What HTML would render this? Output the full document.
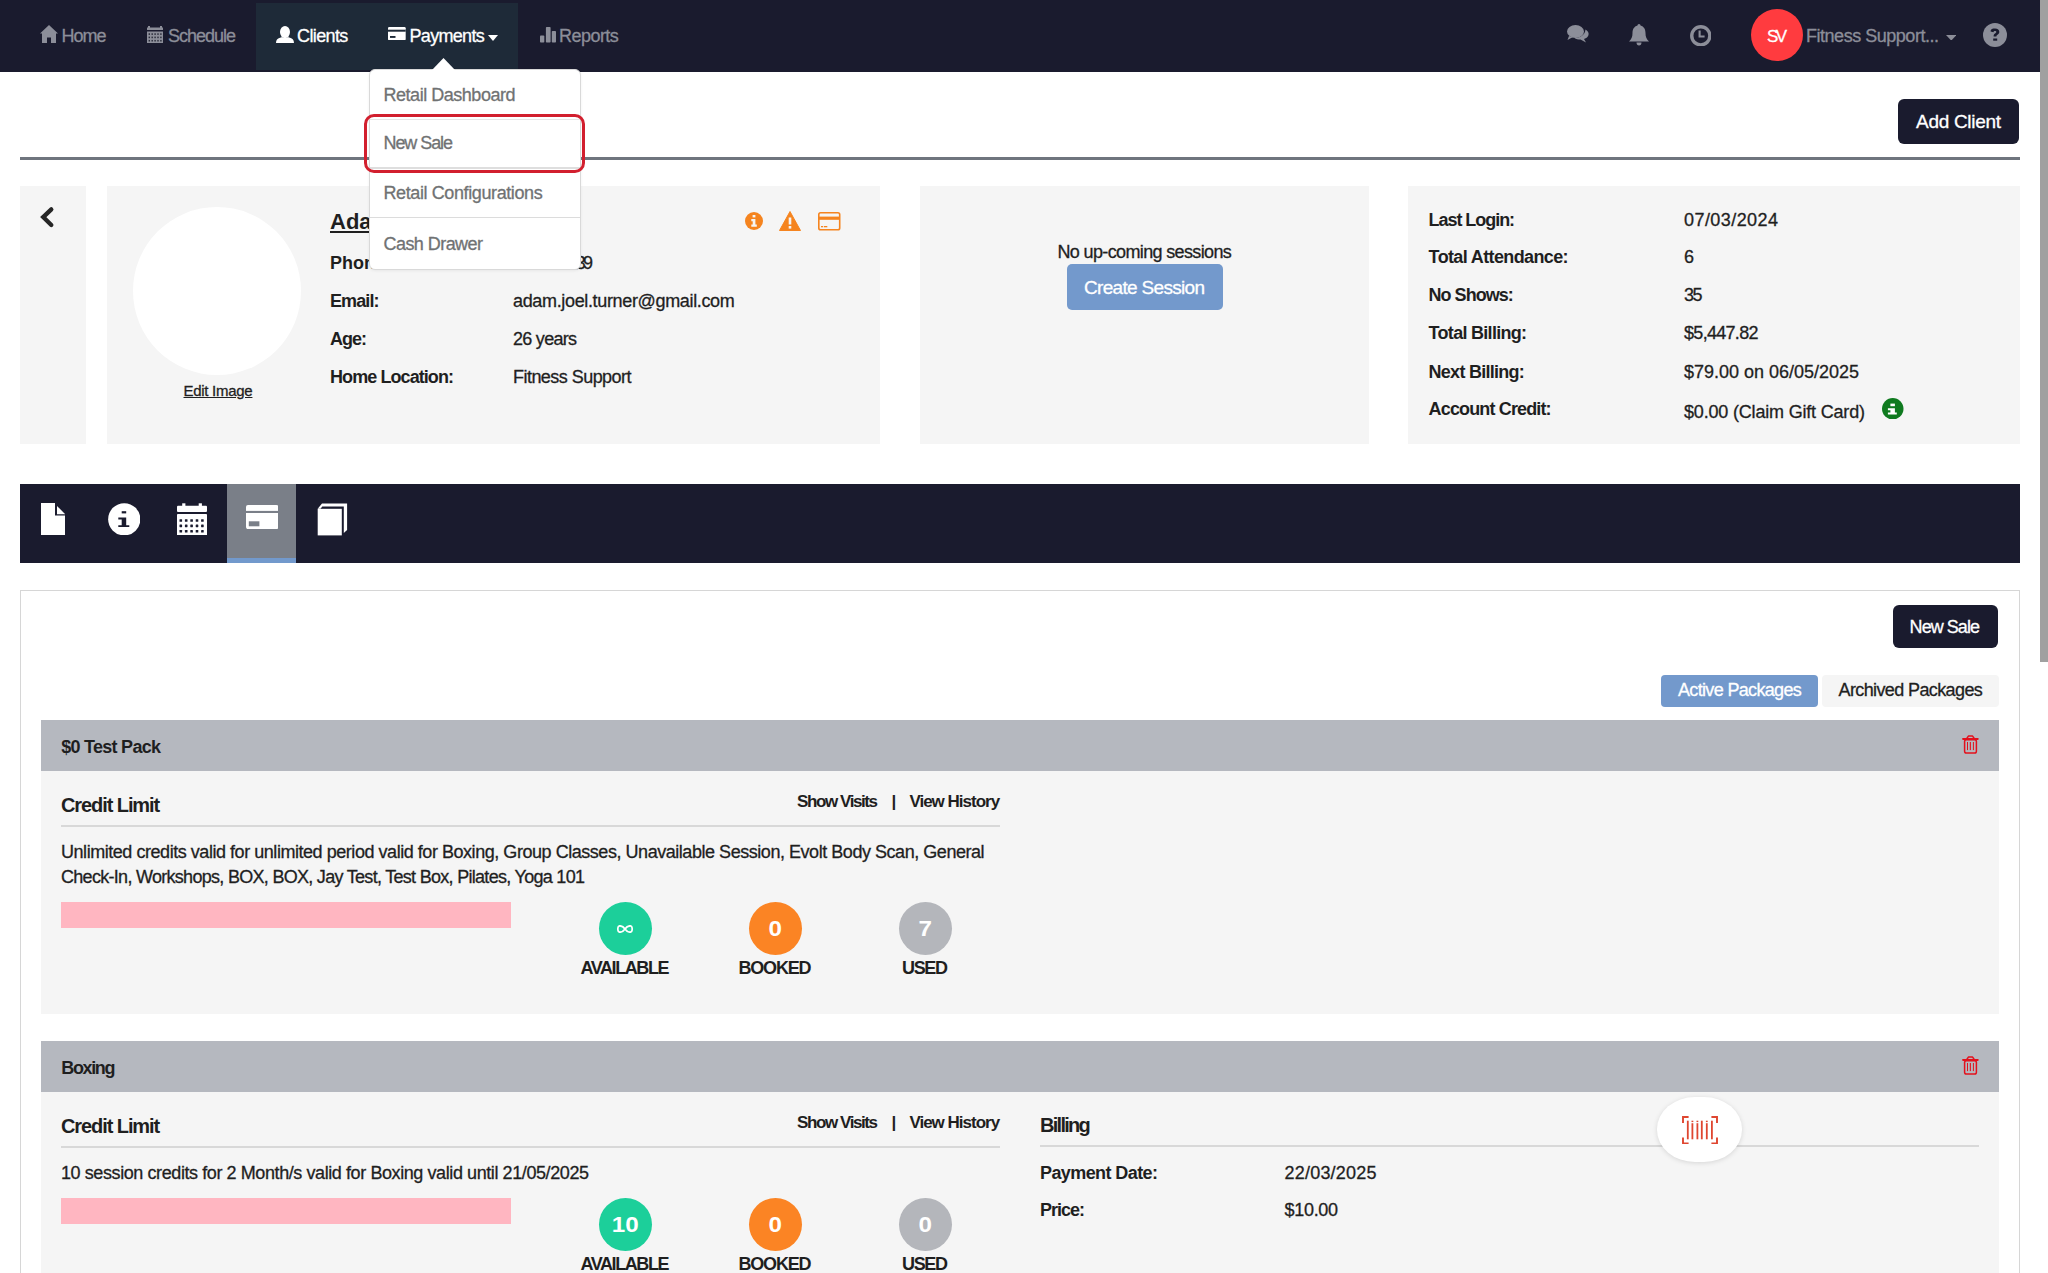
<!DOCTYPE html><html><head><meta charset="utf-8"><style>
html,body{margin:0;padding:0;}
body{width:2048px;height:1273px;overflow:hidden;position:relative;background:#fff;font-family:"Liberation Sans",sans-serif;}
body>div,body>svg{position:absolute;}
.t{white-space:nowrap;-webkit-text-stroke:0.3px currentColor;}
.b{-webkit-text-stroke:0;}
</style></head><body>
<div style="left:0px;top:0px;width:2040px;height:72px;background:#1a1b2e"></div>
<div style="left:256px;top:3px;width:262px;height:67px;background:#1e2a38"></div>
<svg style="left:40px;top:25px;" width="18" height="18" viewBox="0 0 18 18"><path d="M9 0 L18 8.5 L16 8.5 L16 18 L11 18 L11 12.5 L7 12.5 L7 18 L2 18 L2 8.5 L0 8.5 Z" fill="#8c8e99"/></svg>
<div class="t" style="left:61.50px;top:26.76px;font-size:18px;line-height:18px;color:#8c8e99;letter-spacing:-1.005px;">Home</div>
<svg style="left:146.5px;top:26px;" width="16" height="17" viewBox="0 0 16 17"><rect x="1" y="0" width="2" height="3" fill="#8c8e99"/><rect x="13" y="0" width="2" height="3" fill="#8c8e99"/><rect x="0" y="1.5" width="16" height="2.5" fill="#8c8e99"/><rect x="0" y="5.5" width="16" height="11.5" fill="#8c8e99"/><rect x="1.6" y="7.3" width="1.4" height="1.6" fill="#2a2c3a"/><rect x="4.5" y="7.3" width="1.4" height="1.6" fill="#2a2c3a"/><rect x="7.4" y="7.3" width="1.4" height="1.6" fill="#2a2c3a"/><rect x="10.3" y="7.3" width="1.4" height="1.6" fill="#2a2c3a"/><rect x="13.2" y="7.3" width="1.4" height="1.6" fill="#2a2c3a"/><rect x="1.6" y="10.6" width="1.4" height="1.6" fill="#2a2c3a"/><rect x="4.5" y="10.6" width="1.4" height="1.6" fill="#2a2c3a"/><rect x="7.4" y="10.6" width="1.4" height="1.6" fill="#2a2c3a"/><rect x="10.3" y="10.6" width="1.4" height="1.6" fill="#2a2c3a"/><rect x="13.2" y="10.6" width="1.4" height="1.6" fill="#2a2c3a"/><rect x="1.6" y="13.9" width="1.4" height="1.6" fill="#2a2c3a"/><rect x="4.5" y="13.9" width="1.4" height="1.6" fill="#2a2c3a"/><rect x="7.4" y="13.9" width="1.4" height="1.6" fill="#2a2c3a"/><rect x="10.3" y="13.9" width="1.4" height="1.6" fill="#2a2c3a"/><rect x="13.2" y="13.9" width="1.4" height="1.6" fill="#2a2c3a"/></svg>
<div class="t" style="left:168.00px;top:26.76px;font-size:18px;line-height:18px;color:#8c8e99;letter-spacing:-1.009px;">Schedule</div>
<svg style="left:276px;top:25.5px;" width="18" height="17.5" viewBox="0 0 18 17.5"><ellipse cx="9" cy="6.1" rx="5" ry="6.1" fill="#fff"/><path d="M0 17.3 C0 14 1.2 12.6 4 11.8 L6.3 11 C7.5 12.4 10.5 12.4 11.7 11 L14 11.8 C16.8 12.6 18 14 18 17.3 Z" fill="#fff"/></svg>
<div class="t" style="left:297.00px;top:26.76px;font-size:18px;line-height:18px;color:#ffffff;letter-spacing:-0.620px;">Clients</div>
<svg style="left:388px;top:27.1px;" width="17.7" height="13.3" viewBox="0 0 17.7 13.3"><rect x="0" y="0" width="17.7" height="13.3" rx="1.2" fill="#fff"/><rect x="0" y="2.7" width="17.7" height="2" fill="#1e2a38"/><rect x="2" y="9" width="5.5" height="1.9" fill="#1e2a38"/></svg>
<div class="t" style="left:409.50px;top:26.76px;font-size:18px;line-height:18px;color:#ffffff;letter-spacing:-0.691px;">Payments</div>
<svg style="left:488px;top:34.8px;" width="10" height="6" viewBox="0 0 10 6"><path d="M0 0 L10 0 L5 6 Z" fill="#fff"/></svg>
<svg style="left:539.5px;top:27.4px;" width="16" height="15.6" viewBox="0 0 16 15.6"><rect x="0" y="8.6" width="4.3" height="7" rx="0.8" fill="#8c8e99"/><rect x="5.9" y="0" width="4.7" height="15.6" rx="0.8" fill="#8c8e99"/><rect x="11.8" y="3.9" width="4.2" height="11.7" rx="0.8" fill="#8c8e99"/></svg>
<div class="t" style="left:559.00px;top:26.76px;font-size:18px;line-height:18px;color:#8c8e99;letter-spacing:-0.538px;">Reports</div>
<svg style="left:1567.4px;top:24.8px;" width="22" height="18" viewBox="0 0 22 18"><ellipse cx="8.5" cy="6.5" rx="8.5" ry="6.5" fill="#8c8e99"/><path d="M2 11 L0.5 15 L6 12 Z" fill="#8c8e99"/><path d="M18.5 4.5 C21 6 22 8 21.5 10 C21 12 19.5 13 17 14 L19 17.5 L13.5 14.5 C11 14.5 9 14 7.5 13 C13 13 18 10 18.5 4.5 Z" fill="#8c8e99"/></svg>
<svg style="left:1629px;top:23.6px;" width="20" height="22" viewBox="0 0 20 22"><path d="M10 0 C11 0 11.5 1 11.5 1.5 C15 2.5 16.5 5.5 16.5 9 C16.5 13 17.5 15 20 17.5 L0 17.5 C2.5 15 3.5 13 3.5 9 C3.5 5.5 5 2.5 8.5 1.5 C8.5 1 9 0 10 0 Z" fill="#8c8e99"/><path d="M7.5 18.5 L12.5 18.5 C12.5 20.5 11.5 21.5 10 21.5 C8.5 21.5 7.5 20.5 7.5 18.5 Z" fill="#8c8e99"/></svg>
<svg style="left:1689.6px;top:24.7px;" width="21.6" height="21.6" viewBox="0 0 21.6 21.6"><circle cx="10.8" cy="10.8" r="9.05" fill="none" stroke="#8c8e99" stroke-width="3.4"/><path d="M9.6 5.5 L9.6 11.5 L14.6 11.5" fill="none" stroke="#8c8e99" stroke-width="2.1"/></svg>
<div style="left:1751px;top:9px;width:52px;height:52px;background:#ff3b3f;border-radius:50%"></div>
<div class="t" style="left:1767.00px;top:27.61px;font-size:17px;line-height:17px;color:#ffffff;letter-spacing:-2.678px;">SV</div>
<div class="t" style="left:1806.00px;top:27.06px;font-size:18px;line-height:18px;color:#8c8e99;letter-spacing:-0.474px;">Fitness Support...</div>
<svg style="left:1945.7px;top:34.7px;" width="10.5" height="5.6" viewBox="0 0 10.5 5.6"><path d="M0 0 L10.5 0 L5.25 5.6 Z" fill="#8c8e99"/></svg>
<svg style="left:1982.8px;top:22.9px;" width="24" height="24" viewBox="0 0 24 24"><circle cx="12" cy="12" r="12" fill="#8c8e99"/><path d="M7.6 8.6 C7.6 6 9.6 5.6 12 5.6 C14.8 5.6 16.3 6.9 16.3 8.9 C16.3 11.3 13.4 11.6 13.4 13.4 L10.6 13.4 C10.6 10.6 13.3 10.3 13.3 9.1 C13.3 8.4 12.8 8.1 12 8.1 C11.1 8.1 10.6 8.5 10.5 9.3 Z" fill="#1a1b2e"/><rect x="10.2" y="15.5" width="4" height="2.2" fill="#1a1b2e"/></svg>
<div style="left:1898px;top:99px;width:121px;height:45px;background:#1a1b2e;border-radius:6px"></div>
<div class="t" style="left:1916.00px;top:112.32px;font-size:19px;line-height:19px;color:#fff;letter-spacing:-0.296px;">Add Client</div>
<div style="left:20px;top:157px;width:2000px;height:3px;background:#6f757e"></div>
<div style="left:20px;top:186px;width:66px;height:258px;background:#f5f5f5"></div>
<svg style="left:40px;top:205.5px;" width="16" height="23" viewBox="0 0 16 23"><path d="M11.3 3.4 L3.2 11.1 L11.3 19" fill="none" stroke="#262626" stroke-width="4.3" stroke-linecap="round" stroke-linejoin="miter"/></svg>
<div style="left:107px;top:186px;width:773px;height:258px;background:#f5f5f5"></div>
<div style="left:133px;top:206.5px;width:168px;height:168px;background:#fff;border-radius:50%"></div>
<div class="t" style="left:183.50px;top:383.30px;font-size:15px;line-height:15px;color:#1f1f1f;letter-spacing:-0.278px;text-decoration:underline;">Edit Image</div>
<div class="t b" style="left:330.00px;top:211.38px;font-size:22px;line-height:22px;color:#1f1f1f;font-weight:bold;-webkit-text-stroke:0;text-decoration:underline;">Adam Turner</div>
<div class="t b" style="left:330.00px;top:253.76px;font-size:18px;line-height:18px;color:#1f1f1f;font-weight:bold;-webkit-text-stroke:0;">Phone:</div>
<div class="t" style="left:513.00px;top:253.76px;font-size:18px;line-height:18px;color:#1f1f1f;letter-spacing:-2.737px;">0412 900 139</div>
<div class="t b" style="left:330.00px;top:292.26px;font-size:18px;line-height:18px;color:#1f1f1f;font-weight:bold;-webkit-text-stroke:0;letter-spacing:-0.904px;">Email:</div>
<div class="t" style="left:513.00px;top:292.26px;font-size:18px;line-height:18px;color:#1f1f1f;letter-spacing:-0.343px;">adam.joel.turner@gmail.com</div>
<div class="t b" style="left:330.00px;top:329.76px;font-size:18px;line-height:18px;color:#1f1f1f;font-weight:bold;-webkit-text-stroke:0;letter-spacing:-1.000px;">Age:</div>
<div class="t" style="left:513.00px;top:329.76px;font-size:18px;line-height:18px;color:#1f1f1f;letter-spacing:-0.720px;">26 years</div>
<div class="t b" style="left:330.00px;top:367.76px;font-size:18px;line-height:18px;color:#1f1f1f;font-weight:bold;-webkit-text-stroke:0;letter-spacing:-0.923px;">Home Location:</div>
<div class="t" style="left:513.00px;top:367.76px;font-size:18px;line-height:18px;color:#1f1f1f;letter-spacing:-0.540px;">Fitness Support</div>
<svg style="left:744.7px;top:212.4px;" width="18" height="18" viewBox="0 0 18 18"><circle cx="9" cy="9" r="9" fill="#f5841f"/><rect x="7.6" y="3" width="2.8" height="2.4" fill="#f5f5f5"/><path d="M6.3 7 L10.4 7 L10.4 12.6 L11.8 12.6 L11.8 14.8 L6.3 14.8 L6.3 12.6 L7.7 12.6 L7.7 9.2 L6.3 9.2 Z" fill="#f5f5f5"/></svg>
<svg style="left:779px;top:211px;" width="22" height="20" viewBox="0 0 22 20"><path d="M11 0.5 L21.5 19.5 L0.5 19.5 Z" fill="#f5841f" stroke="#f5841f" stroke-width="1" stroke-linejoin="round"/><rect x="9.7" y="6.5" width="2.6" height="7" fill="#f5f5f5"/><rect x="9.7" y="15" width="2.6" height="2.6" fill="#f5f5f5"/></svg>
<svg style="left:818px;top:212px;" width="22.5" height="18.5" viewBox="0 0 22.5 18.5"><rect x="0.8" y="0.8" width="20.9" height="16.9" rx="1.8" fill="none" stroke="#f5841f" stroke-width="1.6"/><rect x="0.8" y="4.6" width="20.9" height="3.2" fill="#f5841f"/><rect x="3" y="14" width="2.2" height="1.3" fill="#f5841f"/><rect x="6" y="14" width="3.3" height="1.3" fill="#f5841f"/></svg>
<div style="left:920px;top:186px;width:449px;height:258px;background:#f5f5f5"></div>
<div class="t" style="left:1057.50px;top:243.36px;font-size:18px;line-height:18px;color:#1f1f1f;letter-spacing:-0.639px;">No up-coming sessions</div>
<div style="left:1066.5px;top:264px;width:156px;height:45.5px;background:#7399cc;border-radius:5px"></div>
<div class="t" style="left:1084.00px;top:277.62px;font-size:19px;line-height:19px;color:#fff;letter-spacing:-0.685px;">Create Session</div>
<div style="left:1408px;top:186px;width:612px;height:258px;background:#f5f5f5"></div>
<div class="t b" style="left:1428.60px;top:210.76px;font-size:18px;line-height:18px;color:#1f1f1f;font-weight:bold;-webkit-text-stroke:0;letter-spacing:-1.049px;">Last Login:</div>
<div class="t" style="left:1684.00px;top:210.76px;font-size:18px;line-height:18px;color:#1f1f1f;letter-spacing:0.435px;">07/03/2024</div>
<div class="t b" style="left:1428.60px;top:248.36px;font-size:18px;line-height:18px;color:#1f1f1f;font-weight:bold;-webkit-text-stroke:0;letter-spacing:-0.625px;">Total Attendance:</div>
<div class="t" style="left:1684.00px;top:248.36px;font-size:18px;line-height:18px;color:#1f1f1f;">6</div>
<div class="t b" style="left:1428.60px;top:286.46px;font-size:18px;line-height:18px;color:#1f1f1f;font-weight:bold;-webkit-text-stroke:0;letter-spacing:-0.988px;">No Shows:</div>
<div class="t" style="left:1684.00px;top:286.46px;font-size:18px;line-height:18px;color:#1f1f1f;letter-spacing:-1.522px;">35</div>
<div class="t b" style="left:1428.60px;top:324.06px;font-size:18px;line-height:18px;color:#1f1f1f;font-weight:bold;-webkit-text-stroke:0;letter-spacing:-0.704px;">Total Billing:</div>
<div class="t" style="left:1684.00px;top:324.06px;font-size:18px;line-height:18px;color:#1f1f1f;letter-spacing:-0.697px;">$5,447.82</div>
<div class="t b" style="left:1428.60px;top:362.76px;font-size:18px;line-height:18px;color:#1f1f1f;font-weight:bold;-webkit-text-stroke:0;letter-spacing:-0.744px;">Next Billing:</div>
<div class="t" style="left:1684.00px;top:362.76px;font-size:18px;line-height:18px;color:#1f1f1f;letter-spacing:-0.009px;">$79.00 on 06/05/2025</div>
<div class="t b" style="left:1428.60px;top:400.26px;font-size:18px;line-height:18px;color:#1f1f1f;font-weight:bold;-webkit-text-stroke:0;letter-spacing:-0.857px;">Account Credit:</div>
<div class="t" style="left:1684.00px;top:402.76px;font-size:18px;line-height:18px;color:#1f1f1f;letter-spacing:-0.184px;">$0.00 (Claim Gift Card)</div>
<svg style="left:1882px;top:397.5px;" width="21.5" height="21.5" viewBox="0 0 21.5 21.5"><circle cx="10.75" cy="10.75" r="10.75" fill="#0f7a1f"/><rect x="8.4" y="5.6" width="4.5" height="2.6" fill="#fff"/><path d="M5.9 10.3 L12.9 10.3 L12.9 14.6 L14.8 14.6 L14.8 16.6 L5.9 16.6 L5.9 14.6 L8.4 14.6 L8.4 12.2 L5.9 12.2 Z" fill="#fff"/></svg>
<div style="left:20px;top:484px;width:2000px;height:79px;background:#1a1b2e"></div>
<div style="left:227px;top:484px;width:69px;height:79px;background:#7a7f88"></div>
<div style="left:227px;top:558px;width:69px;height:5px;background:#7299cc"></div>
<svg style="left:40.8px;top:502.9px;" width="24.5" height="32.1" viewBox="0 0 24.5 32.1"><path d="M0 0 L14 0 L14 12.4 L24.5 12.4 L24.5 32.1 L0 32.1 Z" fill="#fff"/><path d="M16 2.9 L24.3 11.2 L16 11.2 Z" fill="#fff"/></svg>
<svg style="left:107.5px;top:502.6px;" width="32.5" height="32.5" viewBox="0 0 32.5 32.5"><circle cx="16.25" cy="16.25" r="16.1" fill="#fff"/><rect x="13.7" y="8.2" width="4.5" height="2.2" fill="#1a1b2e"/><path d="M10.3 14.6 L18.2 14.6 L18.2 22.2 L21.3 22.2 L21.3 24.1 L10.3 24.1 L10.3 22.2 L13.7 22.2 L13.7 16.5 L10.3 16.5 Z" fill="#1a1b2e"/></svg>
<svg style="left:176.5px;top:502.5px;" width="30" height="32.5" viewBox="0 0 30 32.5"><rect x="0" y="2.7" width="30" height="6.2" rx="1" fill="#fff"/><rect x="5.2" y="0.3" width="3.2" height="4" fill="#fff"/><rect x="21.7" y="0.3" width="3.2" height="4" fill="#fff"/><rect x="0" y="10.9" width="30" height="21.6" rx="0.8" fill="#fff"/><rect x="2.50" y="16.20" width="2.6" height="2.6" rx="0.4" fill="#1a1b2e"/><rect x="7.90" y="16.20" width="2.6" height="2.6" rx="0.4" fill="#1a1b2e"/><rect x="13.30" y="16.20" width="2.6" height="2.6" rx="0.4" fill="#1a1b2e"/><rect x="18.70" y="16.20" width="2.6" height="2.6" rx="0.4" fill="#1a1b2e"/><rect x="24.10" y="16.20" width="2.6" height="2.6" rx="0.4" fill="#1a1b2e"/><rect x="2.50" y="21.60" width="2.6" height="2.6" rx="0.4" fill="#1a1b2e"/><rect x="7.90" y="21.60" width="2.6" height="2.6" rx="0.4" fill="#1a1b2e"/><rect x="13.30" y="21.60" width="2.6" height="2.6" rx="0.4" fill="#1a1b2e"/><rect x="18.70" y="21.60" width="2.6" height="2.6" rx="0.4" fill="#1a1b2e"/><rect x="24.10" y="21.60" width="2.6" height="2.6" rx="0.4" fill="#1a1b2e"/><rect x="2.50" y="27.00" width="2.6" height="2.6" rx="0.4" fill="#1a1b2e"/><rect x="7.90" y="27.00" width="2.6" height="2.6" rx="0.4" fill="#1a1b2e"/><rect x="13.30" y="27.00" width="2.6" height="2.6" rx="0.4" fill="#1a1b2e"/><rect x="18.70" y="27.00" width="2.6" height="2.6" rx="0.4" fill="#1a1b2e"/><rect x="24.10" y="27.00" width="2.6" height="2.6" rx="0.4" fill="#1a1b2e"/></svg>
<svg style="left:245.8px;top:505.4px;" width="32.4" height="24.1" viewBox="0 0 32.4 24.1"><rect x="0" y="0" width="32.4" height="24.1" rx="2" fill="#fff"/><rect x="0" y="5.9" width="32.4" height="2.1" fill="#7a7f88"/><rect x="2.8" y="16.3" width="10.6" height="5" fill="#7a7f88"/></svg>
<svg style="left:317px;top:502.5px;" width="31" height="33" viewBox="0 0 31 33"><path d="M0.7 5.8 L5 0.4 L30.1 0.4 L30.1 27 L26.8 30 L26.8 3.5 L5.3 3.5 L3.5 5.8 Z" fill="#fff"/><rect x="0.7" y="5.8" width="24.1" height="26.6" fill="#fff"/></svg>
<div style="left:20px;top:590px;width:1998px;height:700px;border:1px solid #d6d6d6;background:#fff"></div>
<div style="left:1892.5px;top:604.5px;width:105px;height:43px;background:#1a1b2e;border-radius:6px"></div>
<div class="t" style="left:1909.60px;top:617.76px;font-size:18px;line-height:18px;color:#fff;letter-spacing:-0.948px;">New Sale</div>
<div style="left:1661px;top:674.5px;width:157px;height:32px;background:#7399cc;border-radius:4px"></div>
<div class="t" style="left:1678.00px;top:681.26px;font-size:18px;line-height:18px;color:#fff;letter-spacing:-0.662px;">Active Packages</div>
<div style="left:1822px;top:674.5px;width:177px;height:32px;background:#f5f5f5;border-radius:4px"></div>
<div class="t" style="left:1838.50px;top:681.26px;font-size:18px;line-height:18px;color:#1f1f1f;letter-spacing:-0.611px;">Archived Packages</div>
<div style="left:41px;top:720px;width:1958px;height:51px;background:#b5b8bf"></div>
<div class="t b" style="left:61.25px;top:737.76px;font-size:18px;line-height:18px;color:#1f1f1f;font-weight:bold;-webkit-text-stroke:0;letter-spacing:-0.731px;">$0 Test Pack</div>
<svg style="left:1962px;top:735px;" width="17" height="20" viewBox="0 0 17 20"><path d="M4.9 3.3 L6.6 0.9 L10.4 0.9 L12.1 3.3" fill="none" stroke="#e3111d" stroke-width="1.5" stroke-linejoin="round"/><rect x="0.1" y="2.9" width="16.6" height="2" rx="0.8" fill="#e3111d"/><rect x="2.6" y="4.8" width="11.8" height="13.2" rx="1.8" fill="none" stroke="#e3111d" stroke-width="1.5"/><rect x="5" y="7" width="1" height="8.1" fill="#e3111d"/><rect x="7.8" y="7" width="1.1" height="8.1" fill="#e3111d"/><rect x="10.9" y="7" width="1" height="8.1" fill="#e3111d"/></svg>
<div style="left:41px;top:771px;width:1958px;height:243px;background:#f5f5f5"></div>
<div class="t b" style="left:61.00px;top:794.67px;font-size:20px;line-height:20px;color:#1f1f1f;font-weight:bold;-webkit-text-stroke:0;letter-spacing:-1.083px;font-weight:600;">Credit Limit</div>
<div class="t b" style="left:797.00px;top:793.21px;font-size:17px;line-height:17px;color:#1f1f1f;font-weight:bold;-webkit-text-stroke:0;letter-spacing:-1.410px;">Show Visits</div>
<div class="t b" style="left:891.50px;top:793.21px;font-size:17px;line-height:17px;color:#1f1f1f;font-weight:bold;-webkit-text-stroke:0;">|</div>
<div class="t b" style="left:909.40px;top:793.21px;font-size:17px;line-height:17px;color:#1f1f1f;font-weight:bold;-webkit-text-stroke:0;letter-spacing:-0.993px;">View History</div>
<div style="left:61px;top:825px;width:939px;height:1.5px;background:#d8d8d8"></div>
<div class="t" style="left:61.00px;top:842.76px;font-size:18px;line-height:18px;color:#1f1f1f;letter-spacing:-0.458px;">Unlimited credits valid for unlimited period valid for Boxing, Group Classes, Unavailable Session, Evolt Body Scan, General</div>
<div class="t" style="left:61.00px;top:868.06px;font-size:18px;line-height:18px;color:#1f1f1f;letter-spacing:-0.706px;">Check-In, Workshops, BOX, BOX, Jay Test, Test Box, Pilates, Yoga 101</div>
<div style="left:61px;top:902px;width:450px;height:26px;background:#ffb6c1"></div>
<div style="left:598.5px;top:902.0px;width:53px;height:53px;background:#1ccf9a;border-radius:50%"></div>
<svg style="left:617px;top:924.5px;" width="16" height="8" viewBox="0 0 16 8"><path d="M8 4 C6 1 4 0.8 2.8 0.8 C1.5 0.8 0.8 2 0.8 4 C0.8 6 1.5 7.2 2.8 7.2 C4 7.2 6 7 8 4 C10 1 12 0.8 13.2 0.8 C14.5 0.8 15.2 2 15.2 4 C15.2 6 14.5 7.2 13.2 7.2 C12 7.2 10 7 8 4 Z" fill="none" stroke="#fff" stroke-width="1.7"/></svg>
<div class="t b" style="left:580.40px;top:958.76px;font-size:18px;line-height:18px;color:#1f1f1f;font-weight:bold;-webkit-text-stroke:0;letter-spacing:-1.391px;">AVAILABLE</div>
<div style="left:748.5px;top:902.0px;width:53px;height:53px;background:#fb8424;border-radius:50%"></div>
<div class="t b" style="left:769.18px;top:917.78px;font-size:22px;line-height:22px;color:#fff;font-weight:bold;-webkit-text-stroke:0;transform:scaleX(1.1);transform-origin:50% 50%;">0</div>
<div class="t b" style="left:738.50px;top:958.76px;font-size:18px;line-height:18px;color:#1f1f1f;font-weight:bold;-webkit-text-stroke:0;letter-spacing:-1.201px;">BOOKED</div>
<div style="left:898.5px;top:902.0px;width:53px;height:53px;background:#b4b6bb;border-radius:50%"></div>
<div class="t b" style="left:919.18px;top:917.78px;font-size:22px;line-height:22px;color:#fff;font-weight:bold;-webkit-text-stroke:0;transform:scaleX(1.1);transform-origin:50% 50%;">7</div>
<div class="t b" style="left:902.00px;top:958.76px;font-size:18px;line-height:18px;color:#1f1f1f;font-weight:bold;-webkit-text-stroke:0;letter-spacing:-1.337px;">USED</div>
<div style="left:41px;top:1041px;width:1958px;height:51px;background:#b5b8bf"></div>
<div class="t b" style="left:61.25px;top:1058.76px;font-size:18px;line-height:18px;color:#1f1f1f;font-weight:bold;-webkit-text-stroke:0;letter-spacing:-1.359px;">Boxing</div>
<svg style="left:1962px;top:1056px;" width="17" height="20" viewBox="0 0 17 20"><path d="M4.9 3.3 L6.6 0.9 L10.4 0.9 L12.1 3.3" fill="none" stroke="#e3111d" stroke-width="1.5" stroke-linejoin="round"/><rect x="0.1" y="2.9" width="16.6" height="2" rx="0.8" fill="#e3111d"/><rect x="2.6" y="4.8" width="11.8" height="13.2" rx="1.8" fill="none" stroke="#e3111d" stroke-width="1.5"/><rect x="5" y="7" width="1" height="8.1" fill="#e3111d"/><rect x="7.8" y="7" width="1.1" height="8.1" fill="#e3111d"/><rect x="10.9" y="7" width="1" height="8.1" fill="#e3111d"/></svg>
<div style="left:41px;top:1092px;width:1958px;height:400px;background:#f5f5f5"></div>
<div class="t b" style="left:61.00px;top:1115.67px;font-size:20px;line-height:20px;color:#1f1f1f;font-weight:bold;-webkit-text-stroke:0;letter-spacing:-1.083px;font-weight:600;">Credit Limit</div>
<div class="t b" style="left:797.00px;top:1114.21px;font-size:17px;line-height:17px;color:#1f1f1f;font-weight:bold;-webkit-text-stroke:0;letter-spacing:-1.410px;">Show Visits</div>
<div class="t b" style="left:891.50px;top:1114.21px;font-size:17px;line-height:17px;color:#1f1f1f;font-weight:bold;-webkit-text-stroke:0;">|</div>
<div class="t b" style="left:909.40px;top:1114.21px;font-size:17px;line-height:17px;color:#1f1f1f;font-weight:bold;-webkit-text-stroke:0;letter-spacing:-0.993px;">View History</div>
<div style="left:61px;top:1146px;width:939px;height:1.5px;background:#d8d8d8"></div>
<div class="t" style="left:61.00px;top:1163.76px;font-size:18px;line-height:18px;color:#1f1f1f;letter-spacing:-0.413px;">10 session credits for 2 Month/s valid for Boxing valid until 21/05/2025</div>
<div style="left:61px;top:1198px;width:450px;height:26px;background:#ffb6c1"></div>
<div style="left:598.5px;top:1198.0px;width:53px;height:53px;background:#1ccf9a;border-radius:50%"></div>
<div class="t b" style="left:613.06px;top:1213.78px;font-size:22px;line-height:22px;color:#fff;font-weight:bold;-webkit-text-stroke:0;transform:scaleX(1.1);transform-origin:50% 50%;">10</div>
<div class="t b" style="left:580.40px;top:1254.76px;font-size:18px;line-height:18px;color:#1f1f1f;font-weight:bold;-webkit-text-stroke:0;letter-spacing:-1.391px;">AVAILABLE</div>
<div style="left:748.5px;top:1198.0px;width:53px;height:53px;background:#fb8424;border-radius:50%"></div>
<div class="t b" style="left:769.18px;top:1213.78px;font-size:22px;line-height:22px;color:#fff;font-weight:bold;-webkit-text-stroke:0;transform:scaleX(1.1);transform-origin:50% 50%;">0</div>
<div class="t b" style="left:738.50px;top:1254.76px;font-size:18px;line-height:18px;color:#1f1f1f;font-weight:bold;-webkit-text-stroke:0;letter-spacing:-1.201px;">BOOKED</div>
<div style="left:898.5px;top:1198.0px;width:53px;height:53px;background:#b4b6bb;border-radius:50%"></div>
<div class="t b" style="left:919.18px;top:1213.78px;font-size:22px;line-height:22px;color:#fff;font-weight:bold;-webkit-text-stroke:0;transform:scaleX(1.1);transform-origin:50% 50%;">0</div>
<div class="t b" style="left:902.00px;top:1254.76px;font-size:18px;line-height:18px;color:#1f1f1f;font-weight:bold;-webkit-text-stroke:0;letter-spacing:-1.337px;">USED</div>
<div class="t b" style="left:1040.00px;top:1115.07px;font-size:20px;line-height:20px;color:#1f1f1f;font-weight:bold;-webkit-text-stroke:0;letter-spacing:-1.718px;font-weight:600;">Billing</div>
<div style="left:1040px;top:1145px;width:939px;height:1.5px;background:#d8d8d8"></div>
<div class="t b" style="left:1040.00px;top:1163.76px;font-size:18px;line-height:18px;color:#1f1f1f;font-weight:bold;-webkit-text-stroke:0;letter-spacing:-0.587px;">Payment Date:</div>
<div class="t" style="left:1284.60px;top:1163.76px;font-size:18px;line-height:18px;color:#1f1f1f;letter-spacing:0.190px;">22/03/2025</div>
<div class="t b" style="left:1040.00px;top:1201.46px;font-size:18px;line-height:18px;color:#1f1f1f;font-weight:bold;-webkit-text-stroke:0;letter-spacing:-1.006px;">Price:</div>
<div class="t" style="left:1284.60px;top:1201.46px;font-size:18px;line-height:18px;color:#1f1f1f;letter-spacing:-0.331px;">$10.00</div>
<div style="left:1657.2px;top:1097.2px;width:84.6px;height:64.5px;background:#fff;border-radius:38px / 32px;box-shadow:0 1px 5px rgba(0,0,0,0.13)"></div>
<svg style="left:1682px;top:1115.5px;" width="36" height="28.5" viewBox="0 0 36 28.5"><path d="M1 7 L1 1 L6.6 1 M29.4 1 L35 1 L35 7 M35 21.5 L35 27.5 L29.4 27.5 M6.6 27.5 L1 27.5 L1 21.5" fill="none" stroke="#df4630" stroke-width="1.9"/><rect x="4.90" y="4.7" width="1.8" height="18.6" fill="#df4630"/><rect x="9.50" y="4.7" width="1.8" height="1.4" fill="#df4630"/><rect x="9.50" y="7.2" width="1.8" height="16.1" fill="#df4630"/><rect x="14.50" y="4.7" width="1.8" height="1.4" fill="#df4630"/><rect x="14.50" y="7.2" width="1.8" height="16.1" fill="#df4630"/><rect x="18.90" y="4.7" width="1.8" height="18.6" fill="#df4630"/><rect x="23.90" y="4.7" width="1.8" height="1.4" fill="#df4630"/><rect x="23.90" y="7.2" width="1.8" height="16.1" fill="#df4630"/><rect x="29.00" y="4.7" width="1.8" height="18.6" fill="#df4630"/></svg>
<div style="left:369px;top:69px;width:211.5px;height:200.5px;background:#fff;border:1px solid #d9d9d9;border-radius:6px;box-sizing:border-box;box-shadow:0 1px 3px rgba(0,0,0,0.06)"></div>
<svg style="left:432px;top:58px;" width="23" height="12" viewBox="0 0 23 12"><path d="M0 12 L11.5 0 L23 12 Z" fill="#fff"/></svg>
<div class="t" style="left:383.50px;top:85.56px;font-size:18px;line-height:18px;color:#707273;letter-spacing:-0.472px;">Retail Dashboard</div>
<div class="t" style="left:383.50px;top:134.46px;font-size:18px;line-height:18px;color:#707273;letter-spacing:-1.077px;">New Sale</div>
<div style="left:370px;top:118.5px;width:210px;height:1px;background:#e6e6e6"></div>
<div style="left:370px;top:166.5px;width:210px;height:2px;background:#dedede"></div>
<div class="t" style="left:383.50px;top:183.76px;font-size:18px;line-height:18px;color:#707273;letter-spacing:-0.395px;">Retail Configurations</div>
<div style="left:370px;top:216.7px;width:210px;height:1px;background:#dcdcdc"></div>
<div class="t" style="left:383.50px;top:235.26px;font-size:18px;line-height:18px;color:#707273;letter-spacing:-0.553px;">Cash Drawer</div>
<div style="left:364.2px;top:114px;width:220.6px;height:58.5px;border:3.3px solid #d21f2e;border-radius:10px;box-sizing:border-box"></div>
<div style="left:2040px;top:0px;width:8px;height:661.5px;background:#a0a0a0"></div>
</body></html>
